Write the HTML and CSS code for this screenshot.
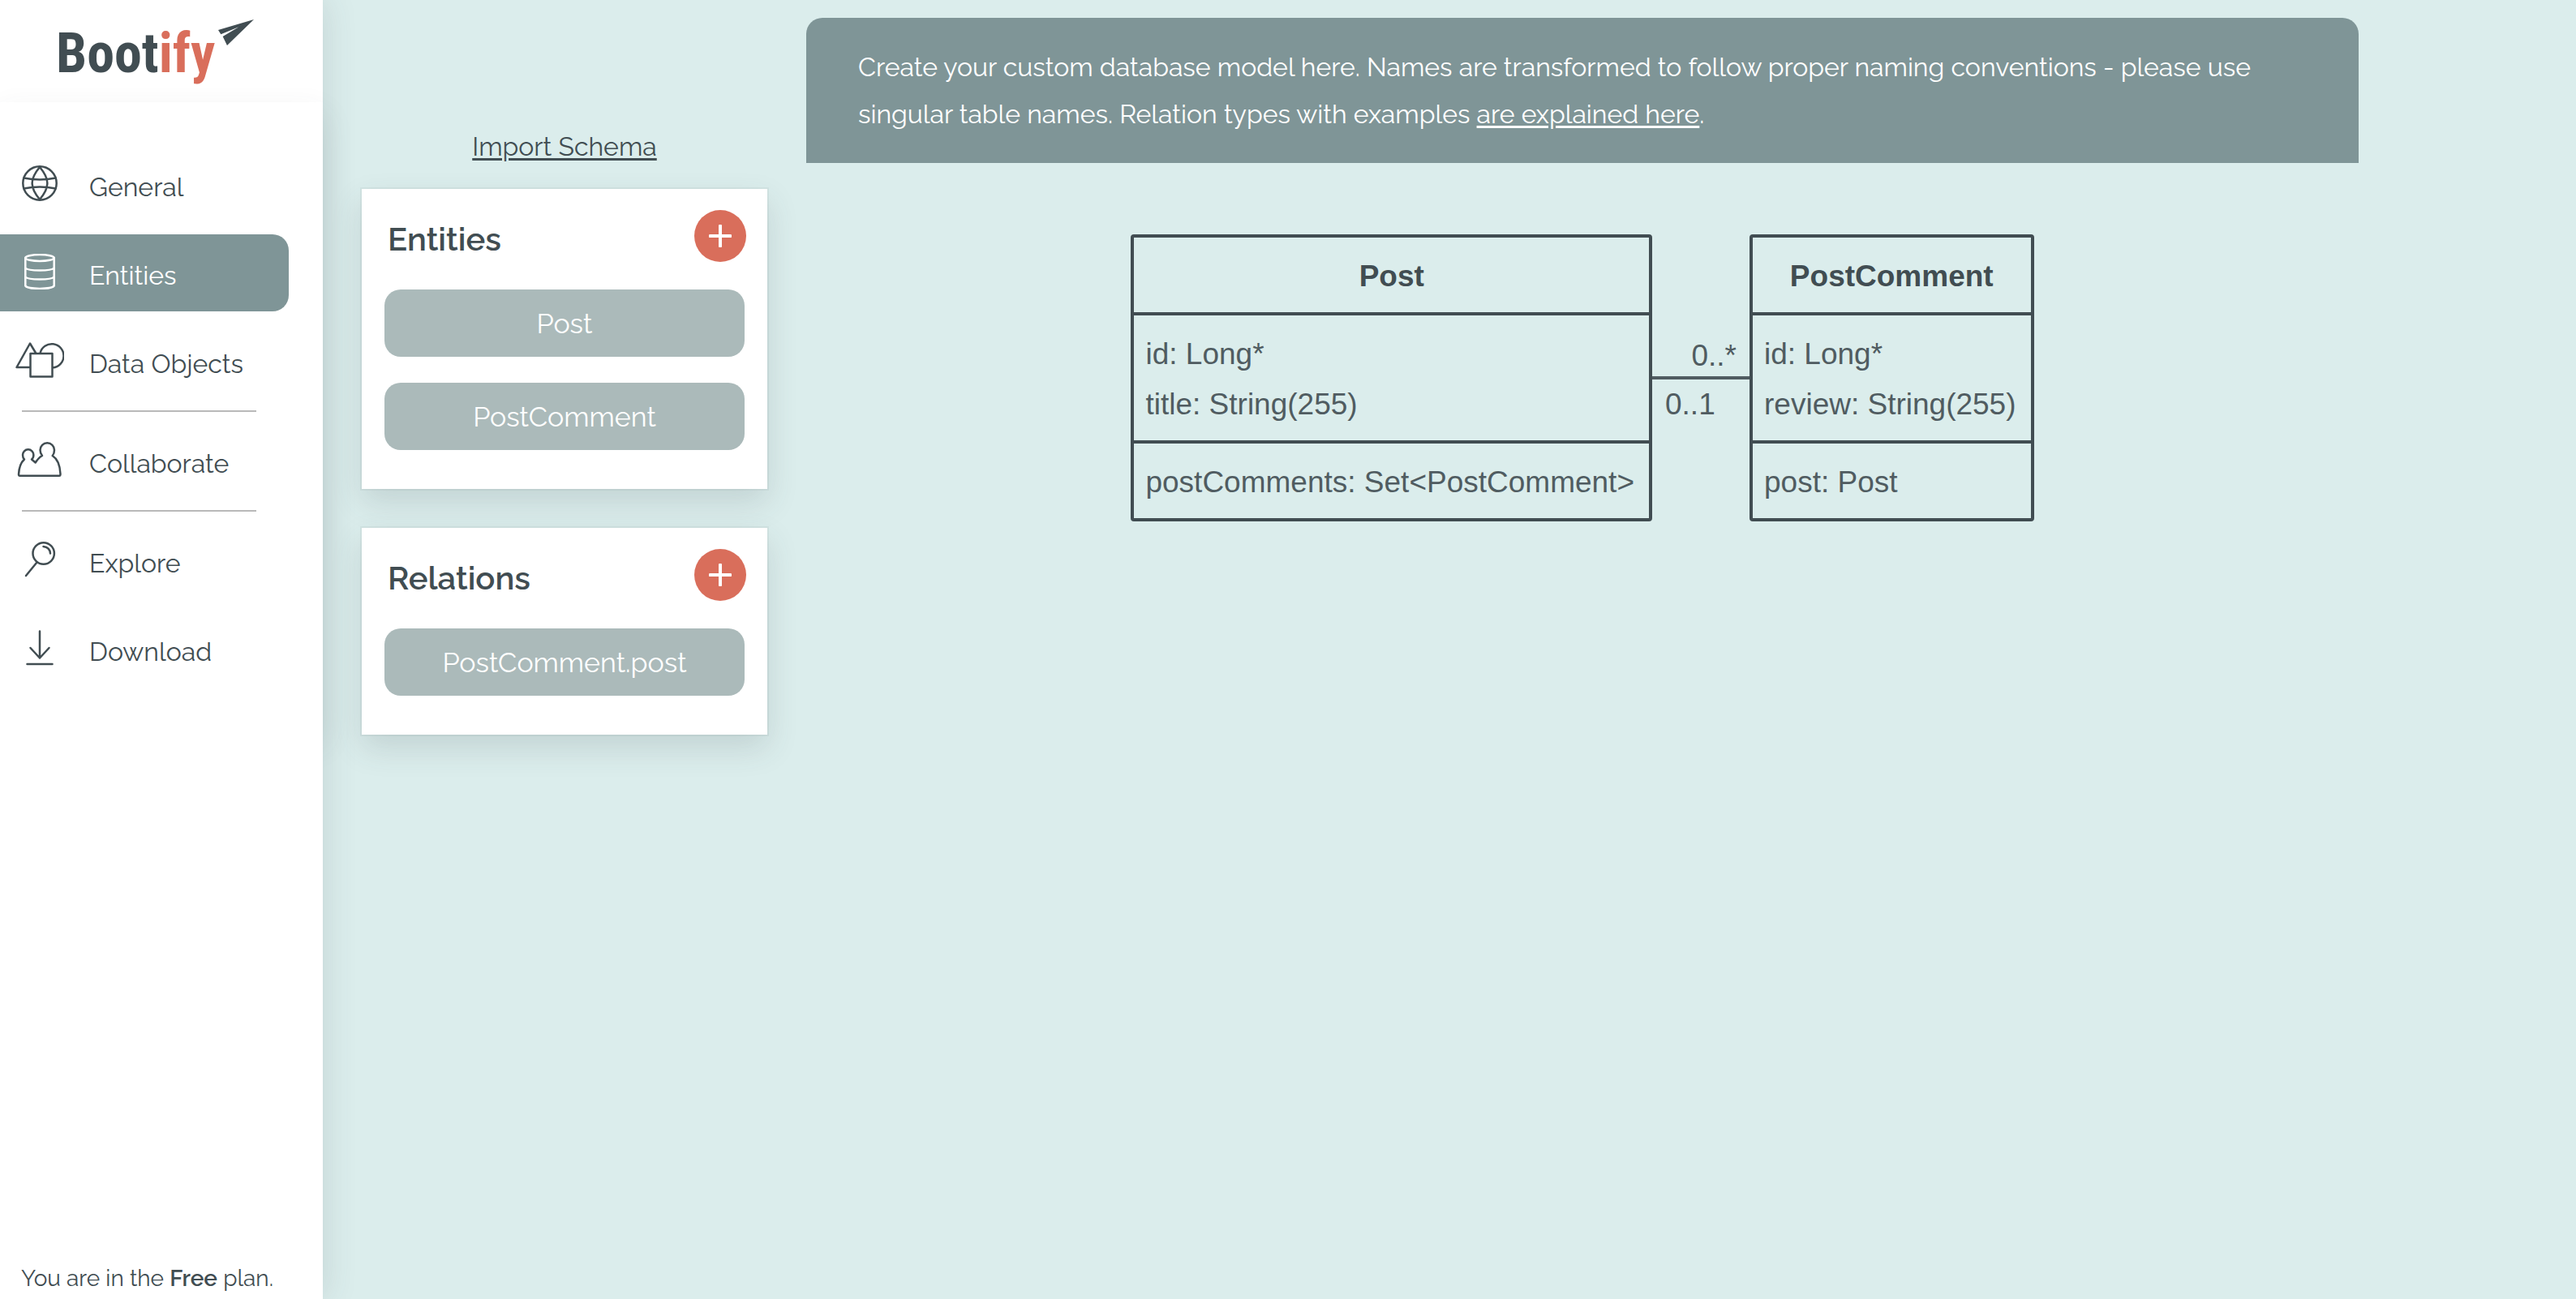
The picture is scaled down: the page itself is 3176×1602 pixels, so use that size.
FILE: index.html
```html
<!DOCTYPE html>
<html lang="en">
<head>
<meta charset="utf-8">
<meta name="viewport" content="width=device-width, initial-scale=1">
<title>Bootify</title>
<link rel="stylesheet" href="styles.css">
</head>
<body>
<div class="app">
  <aside class="sidebar">
    <a class="logo" href="#" aria-label="Bootify">
      <span class="logo-text">Boot<span class="logo-accent">ify</span></span>
      <svg class="logo-plane" viewBox="804 72 132 96" aria-hidden="true"><path d="M804 111 936 72 837 168 821 135 880 100 814 127Z"/></svg>
    </a>
    <nav class="nav">
      <a class="nav-item" href="#">
        <svg class="icon" viewBox="0 0 60 44" aria-hidden="true"><circle cx="30" cy="22" r="20.7"/><path d="M30 2C17.500 17 17.500 27 30 42M30 2C42.500 17 42.500 27 30 42M10.500 15.500Q30 19.500 49.500 15.500M10.500 28.500Q30 24.500 49.500 28.500"/></svg>
        <span class="nav-label">General</span>
      </a>
      <a class="nav-item active" href="#" aria-current="page">
        <svg class="icon" viewBox="0 0 60 44" aria-hidden="true"><ellipse cx="30" cy="5" rx="17.700" ry="4"/><path d="M12.300 5V39.500C15 44 45 44 47.700 39.500V5M12.300 17.500C16 21.500 44 21.500 47.700 17.500M12.300 28.500C16 32.500 44 32.500 47.700 28.500"/></svg>
        <span class="nav-label">Entities</span>
      </a>
      <a class="nav-item" href="#">
        <svg class="icon" viewBox="0 0 60 44" aria-hidden="true"><path d="M18.500 14H45.500V42.500H18.500ZM17.500 31H1.500L18 1.500 25.500 14M30.500 13.500A14.700 14.700 0 1 1 46 31.500"/></svg>
        <span class="nav-label">Data Objects</span>
      </a>
      <hr class="nav-rule">
      <a class="nav-item" href="#">
        <svg class="icon" viewBox="0 0 60 44" aria-hidden="true"><path d="M4 40C4.500 31 6.500 25.500 11 21.500 9 19.500 9 17.500 9 16A6.700 6.700 0 0 1 22.400 16C22.400 18 22 20 20 21.500L24.700 25.500C27 22 29 19 33 17 31 14.500 30.500 12 30.500 10A8.700 8.700 0 0 1 48 10C48 13 47.500 15 45.700 17 52 21 55 29 55.500 39.500Q55.500 41.800 54 41.800H5.500Q4 41.800 4 40Z"/></svg>
        <span class="nav-label">Collaborate</span>
      </a>
      <hr class="nav-rule">
      <a class="nav-item" href="#">
        <svg class="icon" viewBox="0 0 60 44" aria-hidden="true"><circle cx="34.700" cy="14.500" r="13.200"/><path d="M26.500 25.500 13 42M34.500 6Q42.500 7 43 14.500"/></svg>
        <span class="nav-label">Explore</span>
      </a>
      <a class="nav-item" href="#">
        <svg class="icon" viewBox="0 0 60 44" aria-hidden="true"><path d="M30 1.500V34.500M18.500 22 30 34.500 41.500 22M14.500 42H45.500"/></svg>
        <span class="nav-label">Download</span>
      </a>
    </nav>
    <div class="plan"><p class="plan-text">You are in the <strong>Free</strong> plan.</p></div>
  </aside>

  <main class="main">
    <div class="lists">
      <a class="import" href="#">Import Schema</a>
      <section class="card">
        <div class="card-head">
          <h2 class="card-title">Entities</h2>
          <button class="add" type="button" aria-label="Add entity"><svg class="plus" viewBox="0 0 28 28" aria-hidden="true"><path d="M14 1.500V26.500M1.500 14H26.500"/></svg></button>
        </div>
        <button class="entry" type="button">Post</button>
        <button class="entry" type="button">PostComment</button>
      </section>
      <section class="card">
        <div class="card-head">
          <h2 class="card-title">Relations</h2>
          <button class="add" type="button" aria-label="Add relation"><svg class="plus" viewBox="0 0 28 28" aria-hidden="true"><path d="M14 1.500V26.500M1.500 14H26.500"/></svg></button>
        </div>
        <button class="entry" type="button">PostComment.post</button>
      </section>
    </div>

    <div class="model">
      <p class="banner">Create your custom database model here. Names are transformed to follow proper naming conventions - please use singular table names. Relation types with examples <a class="banner-link" href="#">are explained here</a>.</p>
      <div class="diagram">
        <section class="table">
          <h3 class="table-name">Post</h3>
          <div class="table-part"><div>id: Long*</div><div>title: String(255)</div></div>
          <div class="table-part">postComments: Set&lt;PostComment&gt;</div>
        </section>
        <div class="link">
          <span class="link-many">0..*</span>
          <span class="link-line"></span>
          <span class="link-one">0..1</span>
        </div>
        <section class="table">
          <h3 class="table-name">PostComment</h3>
          <div class="table-part"><div>id: Long*</div><div>review: String(255)</div></div>
          <div class="table-part">post: Post</div>
        </section>
      </div>
    </div>
  </main>
</div>
</body>
</html>
```
FILE: styles.css
```css
:root {
  --ink: #414d52;
  --ink-soft: #505c61;
  --mint: #dbedec;
  --sage: #7f9597;
  --sage-light: #abbaba;
  --coral: #d96e5b;
}

* { box-sizing: border-box; }

body {
  margin: 0;
  background: var(--mint);
  color: var(--ink);
  font: 400 32px/58px Raleway, Lato, sans-serif;
}

.app { display: flex; min-height: 100vh; }

.sidebar {
  position: relative;
  display: flex;
  flex-direction: column;
  flex: none;
  width: 398px;
  background: #fff;
  box-shadow: 0 0 40px rgba(65, 77, 82, 0.16);
}

.logo {
  display: flex;
  align-items: flex-start;
  gap: 4px;
  height: 126px;
  padding: 24px 0 0 69px;
  color: var(--ink);
  text-decoration: none;
}
.logo-text {
  padding-top: 6px;
  font: 700 68px/72px "Roboto Condensed", "Liberation Sans Narrow", Roboto, sans-serif;
}
.logo-accent { color: var(--coral); }
.logo-plane { width: 44px; height: 32px; fill: var(--ink); }

.nav {
  display: flex;
  flex-direction: column;
  gap: 14px;
  padding: 54px 0;
  background: #fff;
  box-shadow: 0 16px 36px rgba(65, 77, 82, 0.12);
}
.nav-item {
  display: flex;
  align-items: center;
  gap: 31px;
  height: 95px;
  margin-right: 42px;
  padding-left: 19px;
  border-radius: 0 20px 20px 0;
  color: var(--ink);
  text-decoration: none;
}
.nav-item.active { background: var(--sage); color: #fff; }
.nav-label { padding-top: 6px; }
.nav-rule {
  width: 289px;
  height: 2px;
  margin: -1px 0 -1px 27px;
  border: 0;
  background: #b9b9b9;
}

.icon, .plus {
  fill: none;
  stroke: currentColor;
  stroke-linecap: round;
  stroke-linejoin: round;
}
.icon { width: 60px; height: 44px; margin-bottom: 4px; stroke-width: 2.5; }

/* Opaque footer area, covers the part of the menu shadow inside the sidebar */
.plan {
  position: relative;
  display: flex;
  flex: 1;
  align-items: flex-end;
  padding-left: 26px;
  background: #fff;
}
.plan-text { margin: 0; font-size: 28px; line-height: 50px; }
.plan-text strong { font-weight: 600; }

.main {
  display: flex;
  align-items: flex-start;
  flex: 1;
  gap: 48px;
  min-width: 0;
  padding: 22px 48px;
}

.lists {
  display: flex;
  flex-direction: column;
  flex: none;
  gap: 48px;
  width: 500px;
  padding-top: 130px;
}
.import {
  align-self: center;
  margin-bottom: -25px;
  color: var(--ink);
  text-decoration-thickness: 3px;
  text-underline-offset: 3px;
}

.card {
  display: flex;
  flex-direction: column;
  gap: 32px;
  padding: 26px 28px 48px;
  background: #fff;
  box-shadow: 0 0 0 2px rgba(65, 77, 82, 0.06), 0 16px 36px rgba(65, 77, 82, 0.16);
}
.card-head {
  display: flex;
  align-items: center;
  justify-content: space-between;
  margin: 0 -2px 2px 4px;
}
.card-title { margin: 0; padding-top: 8px; font-size: 40px; font-weight: 600; line-height: 48px; }
.add {
  display: grid;
  place-items: center;
  width: 64px;
  height: 64px;
  padding: 0;
  border: 0;
  border-radius: 50%;
  background: var(--coral);
  color: #fff;
}
.plus { width: 28px; height: 28px; stroke-width: 4; }
.entry {
  height: 83px;
  padding: 0;
  border: 0;
  border-radius: 20px;
  background: var(--sage-light);
  color: #fff;
  font: 400 34px/58px Raleway, Lato, sans-serif;
}

.model { flex: 1; max-width: 1914px; }
.banner {
  margin: 0;
  padding: 32px 64px 31px;
  border-radius: 20px 20px 0 0;
  background: var(--sage);
  color: #fff;
}
.banner-link {
  color: #fff;
  text-decoration-thickness: 3px;
  text-underline-offset: 3px;
}

.diagram {
  display: flex;
  justify-content: center;
  margin-top: 88px;
  color: var(--ink-soft);
  font: 400 37px/62px "Liberation Sans", Arial, sans-serif;
}
.table { border: 4px solid var(--ink); border-radius: 4px; }
.table-name { margin: 0; padding: 17px 16px 13px; color: var(--ink); font-size: 37px; font-weight: 700; text-align: center; }
.table-part { padding: 17px 18px 13px 14px; border-top: 4px solid var(--ink); white-space: nowrap; }

.link { display: grid; grid-template-rows: 1fr 4px 1fr; width: 120px; }
.link-many { align-self: end; padding-right: 16px; line-height: 50px; text-align: right; }
.link-line { background: var(--ink-soft); }
.link-one { padding-left: 16px; line-height: 62px; }
```
